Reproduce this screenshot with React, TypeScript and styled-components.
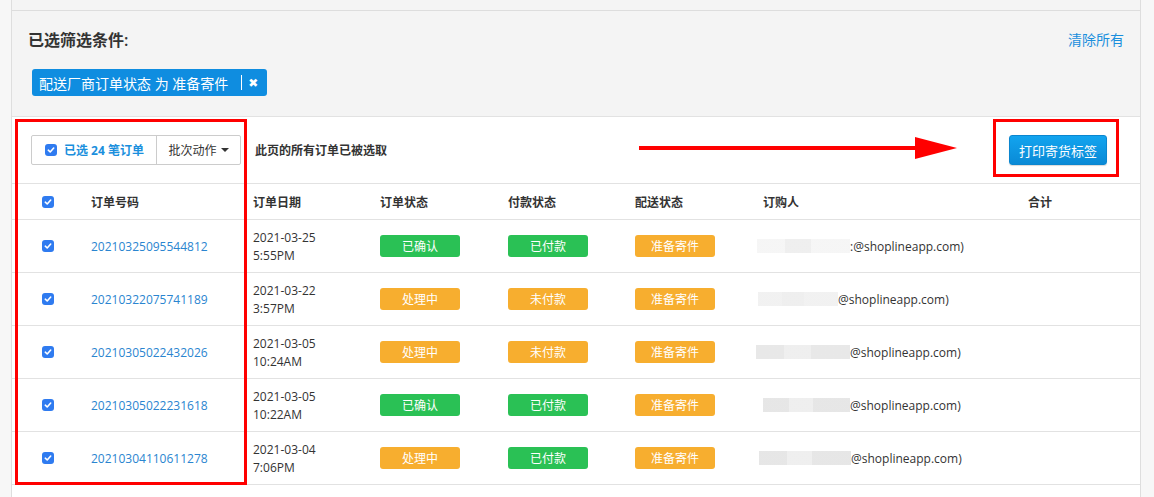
import React from "react";
import styled, { createGlobalStyle } from "styled-components";

const GlobalStyle = createGlobalStyle`
  html, body {
    margin: 0;
    padding: 0;
    background: #f7f7f7;
  }
  body {
    font-family: "Open Sans", "Noto Sans CJK SC", sans-serif;
    color: #333;
  }
`;

type Tone = "green" | "orange";

interface Order {
  id: string;
  date: string;
  time: string;
  status: [string, Tone];
  payment: [string, Tone];
  shipping: [string, Tone];
  prefix: string;
  blur: number;
  blurShade: string;
  indent: number;
}

const orders: Order[] = [
  {
    id: "20210325095544812",
    date: "2021-03-25",
    time: "5:55PM",
    status: ["已确认", "green"],
    payment: ["已付款", "green"],
    shipping: ["准备寄件", "orange"],
    prefix: ":",
    blur: 93,
    blurShade: "#f4f4f4",
    indent: 0,
  },
  {
    id: "20210322075741189",
    date: "2021-03-22",
    time: "3:57PM",
    status: ["处理中", "orange"],
    payment: ["未付款", "orange"],
    shipping: ["准备寄件", "orange"],
    prefix: "",
    blur: 80,
    blurShade: "#efefef",
    indent: 1,
  },
  {
    id: "20210305022432026",
    date: "2021-03-05",
    time: "10:24AM",
    status: ["处理中", "orange"],
    payment: ["未付款", "orange"],
    shipping: ["准备寄件", "orange"],
    prefix: "",
    blur: 94,
    blurShade: "#e4e4e4",
    indent: -1,
  },
  {
    id: "20210305022231618",
    date: "2021-03-05",
    time: "10:22AM",
    status: ["已确认", "green"],
    payment: ["已付款", "green"],
    shipping: ["准备寄件", "orange"],
    prefix: "",
    blur: 87,
    blurShade: "#e2e2e2",
    indent: 6,
  },
  {
    id: "20210304110611278",
    date: "2021-03-04",
    time: "7:06PM",
    status: ["处理中", "orange"],
    payment: ["已付款", "green"],
    shipping: ["准备寄件", "orange"],
    prefix: "",
    blur: 92,
    blurShade: "#e2e2e2",
    indent: 2,
  },
];

const Checkbox = () => (
  <CheckBoxBox>
    <svg width="8" height="8" viewBox="0 0 8 8">
      <path
        d="M1.3 4.2 L3.2 6 L6.7 2"
        fill="none"
        stroke="#fff"
        strokeWidth="1.6"
        strokeLinecap="round"
        strokeLinejoin="round"
      />
    </svg>
  </CheckBoxBox>
);

const App = () => {
  return (
    <Root>
      <GlobalStyle />
      <Panel>
        <TopStrip />
        <FilterArea>
          <FilterHead>
            <FilterTitle>已选筛选条件:</FilterTitle>
            <ClearLink>清除所有</ClearLink>
          </FilterHead>
          <FilterTag>
            配送厂商订单状态 为 准备寄件
            <TagDivider />
            <TagClose>✖</TagClose>
          </FilterTag>
        </FilterArea>

        <TableArea>
          <Toolbar>
            <BtnGroup>
              <SelectedPart>
                <Checkbox />
                已选 24 笔订单
              </SelectedPart>
              <BatchPart>
                批次动作
                <Caret />
              </BatchPart>
            </BtnGroup>
            <AllSelected>此页的所有订单已被选取</AllSelected>
            <PrintButton>打印寄货标签</PrintButton>
          </Toolbar>

          <HeadRow>
            <CheckCell>
              <Checkbox />
            </CheckCell>
            <HeadCell>订单号码</HeadCell>
            <HeadCell>订单日期</HeadCell>
            <HeadCell>订单状态</HeadCell>
            <HeadCell>付款状态</HeadCell>
            <HeadCell>配送状态</HeadCell>
            <HeadCell>订购人</HeadCell>
            <HeadCell>合计</HeadCell>
          </HeadRow>

          {orders.map((o) => (
            <BodyRow key={o.id}>
              <CheckCell>
                <Checkbox />
              </CheckCell>
              <Cell>
                <OrderLink>{o.id}</OrderLink>
              </Cell>
              <Cell>
                <DateText>
                  {o.date}
                  <br />
                  {o.time}
                </DateText>
              </Cell>
              <Cell>
                <Badge $tone={o.status[1]}>{o.status[0]}</Badge>
              </Cell>
              <Cell>
                <Badge $tone={o.payment[1]}>{o.payment[0]}</Badge>
              </Cell>
              <Cell>
                <Badge $tone={o.shipping[1]}>{o.shipping[0]}</Badge>
              </Cell>
              <Cell>
                <Customer $indent={o.indent}>
                  <Redacted $width={o.blur} $shade={o.blurShade} />
                  <EmailText>{o.prefix}@shoplineapp.com)</EmailText>
                </Customer>
              </Cell>
              <Cell />
            </BodyRow>
          ))}
        </TableArea>
      </Panel>

      <HighlightBox $left={15} $top={119} $width={232} $height={366} />
      <HighlightBox $left={993} $top={119} $width={126} $height={58} />
      <Arrow width="318" height="22" viewBox="0 0 318 22">
        <rect x="0" y="9" width="290" height="4" fill="#f00" />
        <polygon points="276,0 318,11 276,22" fill="#f00" />
      </Arrow>
    </Root>
  );
};

export default App;

const Root = styled.div`
  position: relative;
  width: 1154px;
  height: 497px;
  overflow: hidden;
`;

const Panel = styled.div`
  margin-left: 11px;
  width: 1128px;
  min-height: 497px;
  border-left: 1px solid #dedede;
  border-right: 1px solid #dedede;
  background: #fff;
  display: flex;
  flex-direction: column;
`;

const TopStrip = styled.div`
  height: 10px;
  background: #f4f4f4;
  border-bottom: 1px solid #dddddd;
`;

const FilterArea = styled.div`
  background: #f4f4f4;
  height: 106px;
  padding: 18px 16px 0 16px;
  box-sizing: border-box;
  border-bottom: 1px solid #e2e2e2;
`;

const FilterHead = styled.div`
  display: flex;
  justify-content: space-between;
  align-items: center;
  height: 20px;
`;

const FilterTitle = styled.div`
  font-size: 16px;
  font-weight: 600;
  color: #333;
`;

const ClearLink = styled.a`
  font-size: 14px;
  color: #1a8fdd;
  cursor: pointer;
`;

const FilterTag = styled.div`
  display: inline-flex;
  align-items: center;
  margin-top: 20px;
  margin-left: 4px;
  height: 27px;
  padding: 0 9px 0 7px;
  background: #0f8de0;
  border-radius: 3px;
  color: #fff;
  font-size: 14px;
`;

const TagDivider = styled.span`
  display: inline-block;
  width: 1px;
  height: 15px;
  background: #fff;
  margin: 0 6px 0 13px;
`;

const TagClose = styled.span`
  font-size: 12px;
  font-weight: 700;
  font-family: "DejaVu Sans", sans-serif;
`;

const TableArea = styled.div`
  background: #fff;
  display: flex;
  flex-direction: column;
`;

const Toolbar = styled.div`
  display: flex;
  align-items: center;
  height: 66px;
  padding: 0 33px 0 19px;
  border-bottom: 1px solid #e2e2e2;
`;

const BtnGroup = styled.div`
  display: flex;
  height: 30px;
  border: 1px solid #cccccc;
  box-sizing: border-box;
  border-radius: 2px;
`;

const SelectedPart = styled.div`
  display: flex;
  align-items: center;
  gap: 7px;
  padding: 0 0 0 13px;
  width: 125px;
  box-sizing: border-box;
  color: #1a8fdd;
  font-weight: 700;
  font-size: 12px;
  border-right: 1px solid #cccccc;
  white-space: nowrap;
`;

const BatchPart = styled.div`
  display: flex;
  align-items: center;
  justify-content: center;
  width: 83px;
  box-sizing: border-box;
  font-size: 12px;
  color: #333;
  white-space: nowrap;
`;

const Caret = styled.span`
  display: inline-block;
  margin-left: 4px;
  width: 0;
  height: 0;
  border-left: 4px solid transparent;
  border-right: 4px solid transparent;
  border-top: 4px solid #333;
`;

const AllSelected = styled.div`
  margin-left: 14px;
  font-size: 12px;
  font-weight: 700;
  color: #333;
  flex: 1;
`;

const PrintButton = styled.button`
  height: 30px;
  width: 98px;
  border: 1px solid #0b86cf;
  border-radius: 3px;
  background: linear-gradient(#12a4ef, #0a8ad6);
  color: #fff;
  font-family: "Open Sans", "Noto Sans CJK SC", sans-serif;
  font-size: 13px;
  font-weight: 400;
  box-shadow: 0 1px 1px rgba(0, 0, 0, 0.15);
  padding: 0;
`;

const columns = "79px 162px 127px 128px 127px 128px 265px 112px";

const HeadRow = styled.div`
  display: grid;
  grid-template-columns: ${columns};
  height: 35px;
  align-items: center;
  border-bottom: 1px solid #e2e2e2;
`;

const BodyRow = styled.div`
  display: grid;
  grid-template-columns: ${columns};
  height: 53px;
  box-sizing: border-box;
  align-items: center;
  border-bottom: 1px solid #e2e2e2;
`;

const HeadCell = styled.div`
  font-size: 12px;
  font-weight: 600;
  color: #333;
`;

const Cell = styled.div`
  display: flex;
  align-items: center;
`;

const CheckCell = styled.div`
  display: flex;
  align-items: center;
  padding-left: 30px;
`;

const CheckBoxBox = styled.span`
  display: inline-flex;
  align-items: center;
  justify-content: center;
  width: 12px;
  height: 12px;
  border-radius: 3px;
  background: #2f7bf0;
  flex-shrink: 0;
`;

const OrderLink = styled.a`
  font-size: 12px;
  color: #2a85d0;
  cursor: pointer;
`;

const DateText = styled.div`
  font-size: 12px;
  line-height: 18px;
  color: #333;
  margin-top: 2px;
`;

const Badge = styled.span<{ $tone: Tone }>`
  display: inline-flex;
  align-items: center;
  justify-content: center;
  width: 80px;
  height: 22px;
  border-radius: 3px;
  font-size: 12px;
  color: #fff;
  background: ${({ $tone }) => ($tone === "green" ? "#2ac155" : "#f7ae2f")};
`;

const Customer = styled.div<{ $indent: number }>`
  display: flex;
  align-items: center;
  margin-left: ${({ $indent }) => $indent - 6}px;
`;

const Redacted = styled.span<{ $width: number; $shade: string }>`
  display: inline-block;
  width: ${({ $width }) => $width}px;
  height: 14px;
  background: linear-gradient(
    90deg,
    ${({ $shade }) => $shade} 0%,
    ${({ $shade }) => $shade} 30%,
    #ececec 30%,
    #ececec 58%,
    ${({ $shade }) => $shade} 58%
  );
  opacity: 0.85;
`;

const EmailText = styled.span`
  font-size: 12px;
  color: #333;
`;

const HighlightBox = styled.div<{
  $left: number;
  $top: number;
  $width: number;
  $height: number;
}>`
  position: absolute;
  left: ${({ $left }) => $left}px;
  top: ${({ $top }) => $top}px;
  width: ${({ $width }) => $width}px;
  height: ${({ $height }) => $height}px;
  border: 3px solid #ff0000;
  box-sizing: border-box;
  pointer-events: none;
`;

const Arrow = styled.svg`
  position: absolute;
  left: 639px;
  top: 137px;
`;
